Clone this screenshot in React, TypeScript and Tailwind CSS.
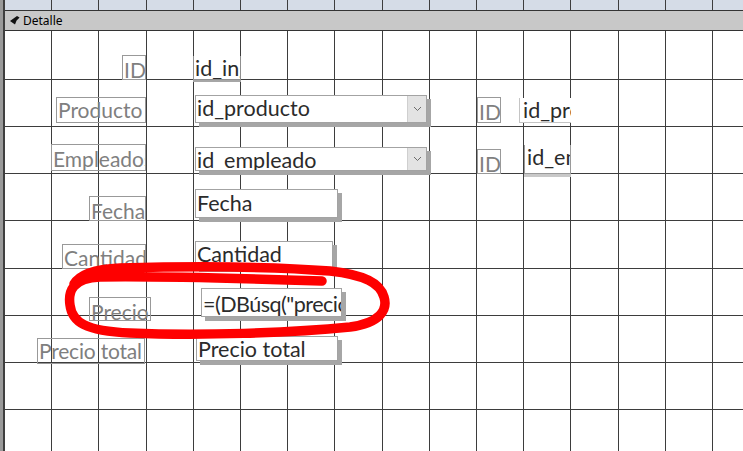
import React from 'react';

const VX = Array.from({ length: 16 }, (_, k) => Math.round(-1 + 47.2 * (k + 1))).filter((x) => x < 738);
const HY = Array.from({ length: 9 }, (_, k) => Math.round(0.6 + 47.2 * (k + 1))).filter((y) => y < 420);

const LABEL =
  "absolute border border-[#999999] text-[#7f7f7f] text-[21px] leading-[24px] overflow-hidden whitespace-nowrap pl-[1px]";
const BOX =
  "absolute bg-white border border-[#a3a3a3] text-[#2b2b2b] text-[21.5px] leading-[24px] overflow-hidden whitespace-nowrap pl-[1px] shadow-[4px_4px_0_#a6a6a6]";

function Chevron() {
  return (
    <svg width="9" height="6" viewBox="0 0 9 6">
      <polyline points="1,1 4.5,4.5 8,1" fill="none" stroke="#6b6b6b" strokeWidth="1" />
    </svg>
  );
}

function Combo({ text, cls }: { text: string; cls: string }) {
  return (
    <div
      className={
        "absolute bg-white border border-[#a3a3a3] text-[#2b2b2b] text-[21.5px] leading-[24px] whitespace-nowrap flex shadow-[4px_4px_0_#a6a6a6] " +
        cls
      }
    >
      <div className="flex-1 overflow-hidden pl-[1px]">{text}</div>
      <div className="w-[19px] bg-[#e3e3e3] border-l border-[#cfcfcf] flex items-center justify-center">
        <Chevron />
      </div>
    </div>
  );
}

export default function App() {
  return (
    <div className="relative w-[743px] h-[451px] overflow-hidden bg-white flex font-['Lato',sans-serif]">
      <div className="w-[5px] h-full bg-[#9a9a9a] border-r-2 border-[#3f3f3f]" />
      <div className="flex-1 flex flex-col">
        <div className="relative h-[10px] bg-[#d5dce7]">
          <svg className="absolute inset-0" width="738" height="10">
            {VX.map((x) => (
              <line key={x} x1={x + 0.5} y1={0} x2={x + 0.5} y2={10} stroke="#3d3d3d" strokeWidth="1" shapeRendering="crispEdges" />
            ))}
          </svg>
        </div>
        <div className="h-[21px] bg-[#c8c8c8] border-y border-[#333333] flex items-center pl-[5px] gap-[3px] font-['Noto_Sans',sans-serif] text-[12px] leading-[19px] text-black">
          <svg width="10" height="9" viewBox="0 0 10 9" className="mb-[1px]">
            <path d="M0 5 L7 0 L9.6 1.6 L6.6 4.6 L5 8.6 Z" fill="#111111" />
          </svg>
          <span>Detalle</span>
        </div>
        <div className="relative flex-1">
          <svg className="absolute inset-0" width="738" height="420">
            {VX.map((x) => (
              <line key={"v" + x} x1={x + 0.5} y1={0} x2={x + 0.5} y2={420} stroke="#3d3d3d" strokeWidth="1" shapeRendering="crispEdges" />
            ))}
            {HY.map((y) => (
              <line key={"h" + y} x1={0} y1={y + 0.5} x2={738} y2={y + 0.5} stroke="#3d3d3d" strokeWidth="1" shapeRendering="crispEdges" />
            ))}
          </svg>

          {/* Labels */}
          <div className={LABEL + " left-[117px] top-[24px] w-[24px] h-[25px] pt-[2px]"}>ID</div>
          <div className={LABEL + " left-[51px] top-[66px] w-[90px] h-[26px]"}>Producto</div>
          <div className={LABEL + " left-[46px] top-[113px] w-[95px] h-[27px] pt-[2px]"}>Empleados</div>
          <div className={LABEL + " left-[84px] top-[165px] w-[57px] h-[25px] pt-[2px]"}>Fecha</div>
          <div className={LABEL + " left-[57px] top-[213px] w-[84px] h-[25px] pt-[1px]"}>Cantidad</div>
          <div className={LABEL + " left-[84px] top-[266px] w-[62px] h-[24px] pt-[2px]"}>Precio</div>
          <div className={LABEL + " left-[32px] top-[307px] w-[108px] h-[26px] tracking-[-0.2px]"}>Precio total</div>
          <div className={LABEL + " left-[472px] top-[66px] w-[24px] h-[26px] pt-[2px]"}>ID</div>
          <div className={LABEL + " left-[472px] top-[118px] w-[24px] h-[25px] pt-[2px]"}>ID</div>

          {/* Text boxes */}
          <div className="absolute left-[188px] top-[25px] w-[48px] h-[24px] bg-white border-x border-b border-[#8f8f8f] text-[#2b2b2b] text-[21.5px] leading-[24px] overflow-hidden whitespace-nowrap pl-[1px] shadow-[0_2px_0_#a6a6a6]">
            id_ing
          </div>
          <Combo text="id_producto" cls="left-[190px] top-[64px] w-[232px] h-[28px]" />
          <Combo text="id_empleado" cls="left-[190px] top-[116px] w-[232px] h-[24px]" />
          <div className="absolute left-[514px] top-[67px] w-[52px] h-[25px] bg-white border-l border-b border-[#c4c4c4] text-[#2b2b2b] text-[21.5px] leading-[24px] overflow-hidden whitespace-nowrap pl-[3px]">
            id_producto
          </div>
          <div className="absolute left-[519px] top-[114px] w-[47px] h-[29px] bg-white border-x border-b border-[#9a9a9a] text-[#2b2b2b] text-[21.5px] leading-[24px] overflow-hidden whitespace-nowrap pl-[2px] shadow-[0_3px_0_#c8c8c8]">
            id_empleado
          </div>
          <div className={BOX + " left-[190px] top-[158px] w-[143px] h-[29px] pt-[1px]"}>Fecha</div>
          <div className={BOX + " left-[190px] top-[210px] w-[138px] h-[27px]"}>Cantidad</div>
          <div className={BOX + " left-[196px] top-[257px] w-[141px] h-[29px] pt-[3px] tracking-[-0.5px]"}>=(DBúsq("precio"</div>
          <div className={BOX + " left-[191px] top-[305px] w-[142px] h-[25px]"}>Precio total</div>
        </div>
      </div>

      <svg className="absolute inset-0 pointer-events-none" width="743" height="451" viewBox="0 0 743 451">
        <path
          d="M 322 281 C 260 279, 160 276, 100 277 C 72 278, 68 292, 70 305 C 72 322, 85 331, 130 333 C 200 336, 290 333, 350 327 C 380 323, 388 310, 384 297 C 380 283, 365 275, 330 271 C 280 267, 200 266, 120 268 C 95 269, 80 274, 74 284"
          fill="none"
          stroke="#fe0000"
          strokeWidth="9.5"
          strokeLinecap="round"
          strokeLinejoin="round"
        />
      </svg>
    </div>
  );
}
